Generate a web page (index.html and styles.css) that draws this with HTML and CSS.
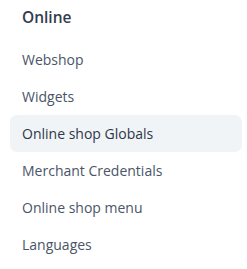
FILE: index.html
```html
<!DOCTYPE html>
<html lang="en">
<head>
  <meta charset="UTF-8" />
  <title>Online</title>
  <link rel="stylesheet" href="styles.css">
</head>
<body>
  <div class="sidebar">
    <h2 class="section-title">Online</h2>
    <ul class="menu">
      <li class="menu-item">Webshop</li>
      <li class="menu-item">Widgets</li>
      <li class="menu-item active">Online shop Globals</li>
      <li class="menu-item">Merchant Credentials</li>
      <li class="menu-item">Online shop menu</li>
      <li class="menu-item">Languages</li>
    </ul>
  </div>
</body>
</html>
```

FILE: styles.css
```css
body {
  font-family: "Open Sans", "Noto Sans", sans-serif;
  background-color: #ffffff;
  margin: 0;
  padding: 0;
}
.sidebar {
  padding: 7px 5px 0 10px;
}
.section-title {
  margin: 0;
  padding: 0 12px;
  font-size: 15.5px;
  font-weight: 600;
  line-height: 20px;
  color: #323c4e;
  height: 34px;
}
.menu {
  list-style: none;
  margin: 0;
  padding: 0;
}
.menu-item {
  display: flex;
  align-items: center;
  height: 37px;
  padding: 0 12px;
  font-size: 14px;
  color: #4a5568;
  border-radius: 7px;
}
.menu-item.active {
  background-color: #f1f4f7;
  color: #2d3748;
}
```
